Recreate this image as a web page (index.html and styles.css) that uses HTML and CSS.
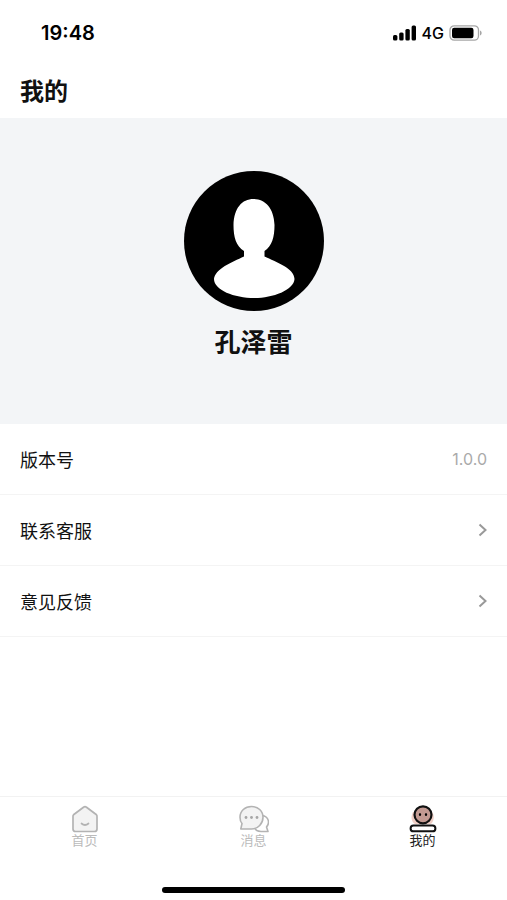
FILE: index.html
```html
<!DOCTYPE html>
<html lang="zh-CN">
<head>
    <meta charset="UTF-8">
    <meta name="viewport" content="width=device-width, initial-scale=1.0">
    <title>我的</title>
    <link rel="stylesheet" href="styles.css">
</head>
<body>
    <div class="page">
        <div class="status-bar">
            <span class="time">19:48</span>
            <div class="status-icons">
                <svg width="24" height="16" viewBox="0 0 24 16">
                    <rect x="0" y="10" width="4.400" height="5.500" rx="1.500"/>
                    <rect x="6.200" y="7.500" width="4.400" height="8" rx="1.500"/>
                    <rect x="12.400" y="4" width="4.400" height="11.500" rx="1.500"/>
                    <rect x="18.600" y="0.500" width="4.400" height="15" rx="1.500"/>
                </svg>
                <span class="network">4G</span>
                <svg width="34" height="16" viewBox="0 0 34 16">
                    <rect x="1" y="0.800" width="28.500" height="14.400" rx="4.200" fill="none" stroke="#a6a6a6" stroke-width="1.300"/>
                    <rect x="3" y="2.800" width="21.500" height="10.400" rx="2.200"/>
                    <path d="M31 5.500c2.200.7 2.200 4.300 0 5z" fill="#a6a6a6"/>
                </svg>
            </div>
        </div>

        <header class="header">
            <h1>我的</h1>
        </header>

        <section class="profile">
            <svg class="avatar" viewBox="0 0 140 140">
                <circle cx="70" cy="70" r="70"/>
                <path fill="#fff" d="M69.500 28C81 28 90 37 90.500 54C90.500 66 88 75 80.500 80V85.500C92 91 110 97 110.500 108C110 119 89 127 70.500 127C50 127 30 119 30 108C31 98 48 91 60 85.500V80C52 75 49.500 66 49.500 54C50 37 58 28 69.500 28Z"/>
            </svg>
            <h2 class="name">孔泽雷</h2>
        </section>

        <main class="list">
            <div class="row">
                <span>版本号</span>
                <span class="version">1.0.0</span>
            </div>
            <a class="row" href="#">
                <span>联系客服</span>
                <svg class="arrow" viewBox="0 0 10 14"><path d="M2.500 1.500L8.500 7L2.500 12.500"/></svg>
            </a>
            <a class="row" href="#">
                <span>意见反馈</span>
                <svg class="arrow" viewBox="0 0 10 14"><path d="M2.500 1.500L8.500 7L2.500 12.500"/></svg>
            </a>
        </main>

        <nav class="tab-bar">
            <a class="tab" href="#">
                <svg width="30" height="28" viewBox="0 0 30 28" fill="#f3f3f3" stroke="#b3b3b3" stroke-width="1.700" stroke-linejoin="round" stroke-linecap="round">
                    <path d="M13.500 2.200Q15 1.200 16.500 2.200L26.500 9.800Q27.200 10.500 27 12V24Q27 26.500 24.500 26.500H5.500Q3 26.500 3 24V12Q2.800 10.500 3.500 9.800Z"/>
                    <path d="M11.500 18.500Q15 21.500 18.500 18.500" fill="none"/>
                </svg>
                <span>首页</span>
            </a>
            <a class="tab" href="#">
                <svg width="30" height="28" viewBox="0 0 30 28" fill="#f3f3f3" stroke="#b3b3b3" stroke-width="1.600" stroke-linejoin="round">
                    <path d="M23 10.500C30 11.500 31 18 27.500 22L29 26.500H22C18 26.500 16 24.500 15.500 22Z" fill="#fff"/>
                    <path d="M12.500 1.500C19 1.500 24 6 24 12.200C24 18.500 19 24 12.500 24H1.800L3 18.500C1.500 16.800 1 14.600 1 12.200C1 6 6 1.500 12.500 1.500Z"/>
                    <g fill="#a6a6a6" stroke="none">
                        <circle cx="7" cy="12.500" r="1.400"/>
                        <circle cx="12.500" cy="12.500" r="1.400"/>
                        <circle cx="18" cy="12.500" r="1.400"/>
                    </g>
                </svg>
                <span>消息</span>
            </a>
            <a class="tab active" href="#">
                <svg width="30" height="28" viewBox="0 0 30 28">
                    <path d="M5 7C2 13 4 17 7 19H23C27 15 26 9 24 7Z" fill="#f0cfc6"/>
                    <circle cx="15" cy="9.800" r="8.500" fill="#c39a92" stroke="#111" stroke-width="2.200"/>
                    <ellipse cx="12" cy="9.500" rx="1.100" ry="1.600"/>
                    <ellipse cx="18" cy="9.500" rx="1.100" ry="1.600"/>
                    <rect x="2.600" y="20.500" width="24.800" height="5.800" rx="2.900" fill="#fff" stroke="#111" stroke-width="2"/>
                </svg>
                <span>我的</span>
            </a>
        </nav>
        <div class="home-indicator"></div>
    </div>
</body>
</html>
```

FILE: styles.css
```css
* { box-sizing: border-box; }
body {
    margin: 0;
    background: #fff;
    color: #111;
    font-family: Inter, "Noto Sans CJK SC", sans-serif;
}
h1, h2 { margin: 0; font-weight: 700; }
a { color: inherit; text-decoration: none; }
svg { display: block; }

.page { display: flex; flex-direction: column; min-height: 100vh; }

.status-bar {
    display: flex;
    align-items: center;
    justify-content: space-between;
    height: 66px;
    padding: 0 24px 0 41px;
    color: #000;
}
.time { font-size: 20px; font-weight: 600; }
.status-icons { display: flex; align-items: center; gap: 5px; }
.network { font-size: 16px; font-weight: 500; }

.header { padding: 8px 20px; }
.header h1 { font-size: 24px; line-height: 36px; }

.profile {
    display: flex;
    flex-direction: column;
    align-items: center;
    gap: 12px;
    padding: 53px 20px 61px;
    background: #f3f5f7;
}
.avatar { width: 140px; height: 140px; }
.name { font-size: 26px; line-height: 40px; }

.row {
    display: flex;
    align-items: center;
    justify-content: space-between;
    height: 71px;
    padding: 0 20px;
    border-bottom: 1px solid #f4f4f4;
    font-size: 18px;
}
.version { color: #aaa; font-size: 16px; }
.arrow { width: 10px; height: 14px; fill: none; stroke: #999; stroke-width: 2; }

.tab-bar {
    display: flex;
    height: 74px;
    margin-top: auto;
    border-top: 1px solid #f2f2f2;
}
.tab {
    flex: 1;
    display: flex;
    flex-direction: column;
    align-items: center;
    padding-top: 8px;
    color: #bbb;
    font-size: 13px;
    line-height: 14px;
}
.tab.active { color: #222; }

.home-indicator {
    width: 36%;
    height: 6px;
    margin: 17px auto 7px;
    border-radius: 3px;
    background: #000;
}
```
